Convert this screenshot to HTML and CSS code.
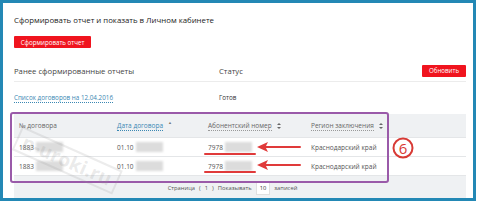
FILE: index.html
```html
<!DOCTYPE html>
<html lang="ru">
<head>
<meta charset="utf-8">
<link rel="stylesheet" href="styles.css">
</head>
<body>
<div class="frame">
  <div class="title">Сформировать отчет и показать в Личном кабинете</div>
  <div class="btn btn-make">Сформировать отчет</div>
  <div class="sec-head">
    <div class="col-a">Ранее сформированные отчеты</div>
    <div class="col-b">Статус</div>
    <div class="btn btn-refresh">Обновить</div>
  </div>
  <div class="sec-row">
    <div class="col-a"><span class="link">Список договоров на 12.04.2016</span></div>
    <div class="col-b">Готов</div>
  </div>
  <div class="table">
    <div class="t-head">
      <div class="c c1">№ договора</div>
      <div class="c c2"><span class="link">Дата договора</span><span class="arr-up">▲</span></div>
      <div class="c c3"><span class="dot">Абонентский номер</span><span class="sort"><i class="up"></i><i class="down"></i></span></div>
      <div class="c c4"><span class="dot">Регион заключения</span><span class="sort"><i class="up"></i><i class="down"></i></span></div>
    </div>
    <div class="t-row">
      <div class="c c1">1883<span class="blur"></span></div>
      <div class="c c2">01.10<span class="blur"></span></div>
      <div class="c c3">7978<span class="blur"></span></div>
      <div class="c c4">Краснодарский край</div>
    </div>
    <div class="t-row">
      <div class="c c1">1883<span class="blur"></span></div>
      <div class="c c2">01.10<span class="blur"></span></div>
      <div class="c c3">7978<span class="blur"></span></div>
      <div class="c c4">Краснодарский край</div>
    </div>
    <div class="t-foot">
      <span>Страница</span><span>(</span><span>1</span><span>)</span><span>Показывать</span><span class="inp">10</span><span>записей</span>
    </div>
  </div>

  <div class="hl-box"></div>
  <svg class="annot" width="480" height="202" viewBox="0 0 480 202">
    <g stroke="#e03a3a" stroke-width="2" fill="none" stroke-linecap="round">
      <line x1="205" y1="154" x2="255" y2="154"/>
      <line x1="205" y1="172" x2="255" y2="172"/>
      <line x1="264" y1="147" x2="300" y2="147"/>
      <line x1="264" y1="165" x2="300" y2="165"/>
    </g>
    <g fill="#e03a3a">
      <polygon points="257,147 268,142 265.5,147 268,152"/>
      <polygon points="257,165 268,160 265.5,165 268,170"/>
    </g>
    <circle cx="403" cy="148" r="9.5" fill="none" stroke="#d83a35" stroke-width="2"/>
  </svg>
  <div class="six">6</div>
  <div class="stamp">n-uroki.ru</div>
</div>
</body>
</html>
```
FILE: styles.css
```css
html, body {
  margin: 0;
  padding: 0;
  background: #ffffff;
}
body {
  font-family: "Open Sans", "Liberation Sans", sans-serif;
  color: #333;
}
.frame {
  position: relative;
  box-sizing: border-box;
  width: 476px;
  height: 201px;
  border: 3px solid #2388b5;
  padding: 9px 7px 0 11px;
  overflow: hidden;
  background: #fff;
}
.title {
  font-size: 7.8px;
  line-height: 16px;
  color: #1a1a1a;
}
.btn {
  background: #f0141e;
  color: #fff;
  font-size: 6.2px;
  display: flex;
  align-items: center;
  justify-content: center;
  border-radius: 1px;
}
.btn-make {
  margin-top: 8px;
  width: 77px;
  height: 12px;
}
.sec-head {
  margin-top: 12px;
  height: 21px;
  display: flex;
  align-items: center;
  border-bottom: 1px solid #ececec;
  font-size: 7.7px;
  color: #444;
}
.col-a {
  width: 205px;
}
.col-b {
  flex: 1;
}
.btn-refresh {
  width: 44px;
  height: 12px;
}
.sec-row {
  height: 31px;
  display: flex;
  align-items: center;
  font-size: 6.3px;
  color: #333;
}
.link {
  color: #3b88b3;
  border-bottom: 1px dotted #3b88b3;
}
.table {
  margin-top: 1px;
  font-size: 6.5px;
  color: #555;
}
.t-head {
  height: 23px;
  display: flex;
  align-items: center;
  background: #eff1f3;
  color: #666;
}
.t-row {
  height: 18px;
  display: flex;
  align-items: center;
  border-bottom: 1px solid #e4e6e8;
}
.t-head + .t-row {
  border-top: 1px solid #e4e6e8;
}
.c {
  display: flex;
  align-items: center;
}
.c1 { width: 98px; padding-left: 5px; }
.c2 { width: 91px; }
.c3 { width: 103px; }
.c4 { flex: 1; }
.dot {
  border-bottom: 1px dotted #999;
}
.arr-up {
  font-size: 4px;
  color: #777;
  margin-left: 5px;
  margin-top: -6px;
}
.sort {
  display: flex;
  flex-direction: column;
  gap: 2px;
  margin-left: 5px;
}
.sort i {
  display: block;
  width: 0;
  height: 0;
  border-left: 2px solid transparent;
  border-right: 2px solid transparent;
}
.sort .up { border-bottom: 2.5px solid #666; }
.sort .down { border-top: 2.5px solid #666; }
.blur {
  display: inline-block;
  width: 27px;
  height: 10px;
  margin-left: 2px;
  background: #dcdcdc;
  filter: blur(1px);
}
.t-foot {
  height: 23px;
  background: #eff1f3;
  display: flex;
  align-items: center;
  justify-content: center;
  gap: 4px;
  font-size: 5.8px;
  color: #555;
  padding-right: 15px;
}
.inp {
  background: #fff;
  border: 1px solid #e0e0e0;
  padding: 2px 3px;
  color: #333;
}
.hl-box {
  position: absolute;
  left: 7px;
  top: 109px;
  width: 375px;
  height: 67px;
  border: 2px solid #9a5aa9;
  border-radius: 3px;
}
.annot {
  position: absolute;
  left: -3px;
  top: -3px;
}
.six {
  position: absolute;
  left: 394px;
  top: 135px;
  width: 12px;
  text-align: center;
  font-size: 15px;
  line-height: 20px;
  color: #d83a35;
}
.stamp {
  position: absolute;
  left: 14px;
  top: 122px;
  font-size: 19px;
  line-height: 22px;
  font-weight: bold;
  color: rgba(150, 150, 150, 0.2);
  border: 2px solid rgba(150, 150, 150, 0.18);
  padding: 0 5px;
  transform: rotate(24deg);
  transform-origin: left center;
}
```
